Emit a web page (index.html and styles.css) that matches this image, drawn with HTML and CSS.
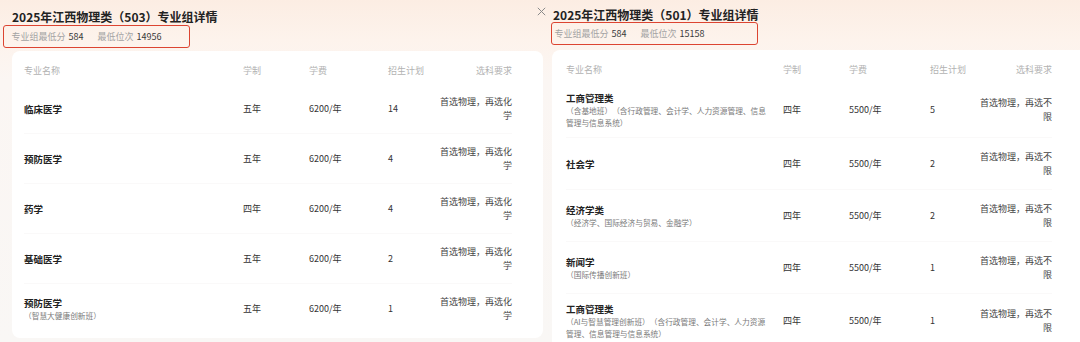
FILE: index.html
```html
<!DOCTYPE html>
<html lang="zh-CN">
<head>
<meta charset="utf-8">
<title>专业组详情</title>
<link rel="stylesheet" href="styles.css">
</head>
<body>
<div class="page">
  <section class="panel panel-left">
    <h1 class="title">2025年江西物理类（503）专业组详情</h1>
    <div class="stats stats-left">
      <span class="lbl">专业组最低分</span><span class="val">584</span>
      <span class="lbl lbl-gap">最低位次</span><span class="val">14956</span>
    </div>
    <div class="card card-left">
      <div class="row head">
        <div class="c-name">专业名称</div><div>学制</div><div>学费</div><div>招生计划</div><div class="c-req">选科要求</div>
      </div>
      <div class="row">
        <div class="c-name"><div class="name">临床医学</div></div>
        <div>五年</div><div>6200/年</div><div>14</div><div class="c-req">首选物理，再选化学</div>
      </div>
      <div class="row">
        <div class="c-name"><div class="name">预防医学</div></div>
        <div>五年</div><div>6200/年</div><div>4</div><div class="c-req">首选物理，再选化学</div>
      </div>
      <div class="row">
        <div class="c-name"><div class="name">药学</div></div>
        <div>四年</div><div>6200/年</div><div>4</div><div class="c-req">首选物理，再选化学</div>
      </div>
      <div class="row">
        <div class="c-name"><div class="name">基础医学</div></div>
        <div>五年</div><div>6200/年</div><div>2</div><div class="c-req">首选物理，再选化学</div>
      </div>
      <div class="row">
        <div class="c-name"><div class="name">预防医学</div><div class="sub">（智慧大健康创新班）</div></div>
        <div>五年</div><div>6200/年</div><div>1</div><div class="c-req">首选物理，再选化学</div>
      </div>
    </div>
  </section>

  <section class="panel panel-right">
    <svg class="close" width="9" height="9" viewBox="0 0 9 9" aria-hidden="true">
      <path d="M0.8 0.8 L8.2 8.2 M8.2 0.8 L0.8 8.2" stroke="#8a8a8a" stroke-width="1" fill="none"/>
    </svg>
    <h1 class="title">2025年江西物理类（501）专业组详情</h1>
    <div class="stats stats-right">
      <span class="lbl">专业组最低分</span><span class="val">584</span>
      <span class="lbl lbl-gap">最低位次</span><span class="val">15158</span>
    </div>
    <div class="card card-right">
      <div class="row head">
        <div class="c-name">专业名称</div><div>学制</div><div>学费</div><div>招生计划</div><div class="c-req">选科要求</div>
      </div>
      <div class="row">
        <div class="c-name"><div class="name">工商管理类</div><div class="sub">（含基地班）（含行政管理、会计学、人力资源管理、信息管理与信息系统）</div></div>
        <div>四年</div><div>5500/年</div><div>5</div><div class="c-req">首选物理，再选不限</div>
      </div>
      <div class="row">
        <div class="c-name"><div class="name">社会学</div></div>
        <div>四年</div><div>5500/年</div><div>2</div><div class="c-req">首选物理，再选不限</div>
      </div>
      <div class="row">
        <div class="c-name"><div class="name">经济学类</div><div class="sub">（经济学、国际经济与贸易、金融学）</div></div>
        <div>四年</div><div>5500/年</div><div>2</div><div class="c-req">首选物理，再选不限</div>
      </div>
      <div class="row">
        <div class="c-name"><div class="name">新闻学</div><div class="sub">（国际传播创新班）</div></div>
        <div>四年</div><div>5500/年</div><div>1</div><div class="c-req">首选物理，再选不限</div>
      </div>
      <div class="row">
        <div class="c-name"><div class="name">工商管理类</div><div class="sub">（AI与智慧管理创新班）（含行政管理、会计学、人力资源管理、信息管理与信息系统）</div></div>
        <div>四年</div><div>5500/年</div><div>1</div><div class="c-req">首选物理，再选不限</div>
      </div>
    </div>
  </section>
</div>
</body>
</html>
```
FILE: styles.css
```css
* { box-sizing: border-box; }
html, body { margin: 0; padding: 0; }
body {
  width: 1080px;
  height: 342px;
  overflow: hidden;
  font-family: "Noto Sans CJK SC", "Noto Sans", sans-serif;
  color: #333;
  background: #f9f7f5;
}
.page {
  display: flex;
  width: 1080px;
  height: 342px;
}
.panel {
  height: 342px;
  background: linear-gradient(#fcede3 0px, #fdf3ec 40px, #fbf6f3 80px, #f9f7f5 342px);
}
.panel-left {
  width: 546px;
  padding-left: 12px;
}
.panel-right {
  flex: 1;
  position: relative;
  padding-left: 6px;
}
.close {
  position: absolute;
  left: -9px;
  top: 7px;
}
.title {
  margin: 0;
  font-size: 12px;
  line-height: 16px;
  font-weight: 700;
  color: #222;
  white-space: nowrap;
}
.panel-left .title { padding-top: 9px; }
.panel-right .title { padding-top: 7px; padding-left: 1px; }

.stats {
  display: flex;
  align-items: center;
  height: 23px;
  border: 1.5px solid #dc4431;
  border-radius: 3px;
  font-size: 9px;
  white-space: nowrap;
}
.stats-left {
  width: 187px;
  margin-left: -9px;
  padding-left: 7.5px;
}
.stats-right {
  width: 207px;
  margin-left: -1px;
  margin-top: -1px;
  padding-left: 2.5px;
}
.lbl { color: #a3a3a3; }
.val { color: #3a3a3a; margin-left: 3px; }
.lbl-gap { margin-left: 14px; }

.card {
  background: #fff;
  border-radius: 8px;
  padding-top: 7px;
}
.card-left {
  width: 531px;
  margin-top: 3px;
  height: 287px;
  padding-left: 12px;
  padding-right: 31px;
}
.card-right {
  width: 528px;
  margin-top: 5px;
  height: 300px;
  padding-left: 14px;
  padding-right: 28px;
  border-radius: 8px 0 0 8px;
}
.row {
  display: grid;
  align-items: center;
  font-size: 9px;
  line-height: 14px;
  color: #333;
  border-bottom: 1px solid #faf9f9;
}
.row:last-child { border-bottom: none; }
.card-left .row {
  grid-template-columns: 219px 66px 79px 48px 76px;
  min-height: 50px;
}
.card-right .row {
  grid-template-columns: 217px 66px 81px 48px 74px;
  min-height: 52px;
  padding: 8px 0;
}
.row.head {
  min-height: 26px;
  padding: 0;
  color: #b2b2b2;
  border-bottom: none;
}
.card-right .row.head { min-height: 26px; padding: 0; }
.c-req {
  text-align: right;
  color: #444;
}
.row.head .c-req { color: #b2b2b2; }
.name {
  font-size: 9.5px;
  line-height: 14px;
  font-weight: 700;
  color: #222;
}
.sub {
  font-size: 7.7px;
  line-height: 12px;
  color: #7a7a7a;
  max-width: 204px;
  text-spacing-trim: space-all;
}
```
